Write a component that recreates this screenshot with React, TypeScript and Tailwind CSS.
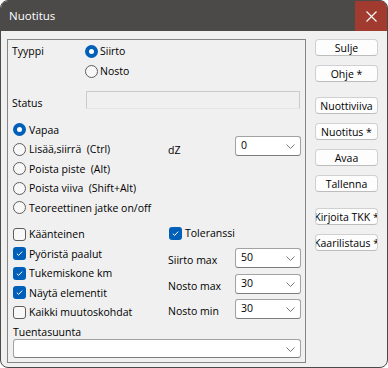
import React from "react";

function Radio({ checked }: { checked?: boolean }) {
  if (checked) {
    return (
      <span className="flex h-[13px] w-[13px] shrink-0 items-center justify-center rounded-full bg-[#005fb8]">
        <span className="h-[5px] w-[5px] rounded-full bg-white" />
      </span>
    );
  }
  return <span className="h-[13px] w-[13px] shrink-0 rounded-full border border-[#5d5d5d] bg-[#f8f8f8]" />;
}

function Check({ checked }: { checked?: boolean }) {
  if (checked) {
    return (
      <span className="flex h-[13px] w-[13px] shrink-0 items-center justify-center rounded-[3px] bg-[#005fb8]">
        <svg width="9" height="9" viewBox="0 0 9 9">
          <path d="M1.8 4.7 L3.6 6.4 L7.2 2.6" fill="none" stroke="white" strokeWidth="1" />
        </svg>
      </span>
    );
  }
  return <span className="h-[13px] w-[13px] shrink-0 rounded-[3px] border border-[#5d5d5d] bg-[#f8f8f8]" />;
}

function Combo({ value, className }: { value?: string; className: string }) {
  return (
    <div
      className={`flex items-center justify-between rounded-[3px] border border-[#a2a2a2] border-b-[#7d7d7d] bg-white pl-[5px] pr-[5px] ${className}`}
    >
      <span className="-mt-[2px] leading-[14px]">{value}</span>
      <svg width="9" height="5" viewBox="0 0 9 5" className="mt-[1px]">
        <path d="M0.5 0.5 L4.5 4.5 L8.5 0.5" fill="none" stroke="#6b6b6b" strokeWidth="0.9" />
      </svg>
    </div>
  );
}

function Btn({ label, className = "" }: { label: string; className?: string }) {
  return (
    <button
      type="button"
      className={`flex h-[17px] w-[63px] items-center justify-center overflow-hidden whitespace-nowrap rounded-[4px] border border-[#d0d0d0] border-b-[#bdbdbd] bg-[#fdfdfd] leading-[14px] ${className}`}
    >
      {label}
    </button>
  );
}

const modes = ["Vapaa", "Lisää,siirrä  (Ctrl)", "Poista piste  (Alt)", "Poista viiva  (Shift+Alt)", "Teoreettinen jatke on/off"];

const options = [
  { label: "Käänteinen", checked: false },
  { label: "Pyöristä paalut", checked: true },
  { label: "Tukemiskone km", checked: true },
  { label: "Näytä elementit", checked: true },
  { label: "Kaikki muutoskohdat", checked: false },
];

const limits = [
  { label: "Siirto max", value: "50" },
  { label: "Nosto max", value: "30" },
  { label: "Nosto min", value: "30" },
];

export default function App() {
  return (
    <div className="h-[368px] w-[388px] bg-white font-['Open_Sans','Noto_Sans',sans-serif] text-[10.5px] text-black">
      <div className="flex h-full w-full flex-col overflow-hidden rounded-[8px] border border-[#4b4a48] bg-[#f0f0f0]">
        {/* title bar */}
        <div className="flex h-[30px] shrink-0 items-center justify-between bg-[#4b4a48]">
          <span className="pl-[8px] text-[11.5px] text-white">Nuotitus</span>
          <div className="flex h-[30px] w-[32px] items-center justify-center bg-[#a13a2f]">
            <svg width="11" height="11" viewBox="0 0 11 11">
              <path d="M0.5 0.5 L10.5 10.5 M10.5 0.5 L0.5 10.5" stroke="white" strokeWidth="1.1" />
            </svg>
          </div>
        </div>

        <div className="flex">
          {/* group box */}
          <div className="ml-[6px] mt-[8px] flex h-[324px] w-[299px] flex-col border border-[#858585]">
            <div className="mt-[1px] flex">
              <span className="w-[77px] pl-[4px] pt-[3px] leading-[14px]">Tyyppi</span>
              <div className="flex flex-col">
                <div className="flex h-[20px] items-center gap-[2px]">
                  <Radio checked />
                  <span className="leading-[14px]">Siirto</span>
                </div>
                <div className="flex h-[20px] items-center gap-[2px]">
                  <Radio />
                  <span className="leading-[14px]">Nosto</span>
                </div>
              </div>
            </div>

            <div className="mt-[10px] flex items-start">
              <span className="w-[78px] pl-[4px] pt-[5px] leading-[14px]">Status</span>
              <div className="h-[18px] w-[214px] border border-[#cbcbcb] border-b-[#e6e6e6] bg-[#f0f0f0]" />
            </div>

            <div className="mt-[10px] flex">
              <div className="flex w-[160px] flex-col pl-[5px]">
                {modes.map((m, i) => (
                  <div key={m} className="flex h-[19.5px] items-center gap-[3px]">
                    <Radio checked={i === 0} />
                    <span className="whitespace-pre leading-[14px]">{m}</span>
                  </div>
                ))}
              </div>
              <span className="w-[67px] pt-[23px] leading-[14px]">dZ</span>
              <Combo value="0" className="mt-[16px] h-[20px] w-[66px]" />
            </div>

            <div className="mt-[7px] flex">
              <div className="flex w-[160px] flex-col pl-[5px]">
                {options.map((o) => (
                  <div key={o.label} className="flex h-[19.5px] items-center gap-[3px]">
                    <Check checked={o.checked} />
                    <span className="leading-[14px]">{o.label}</span>
                  </div>
                ))}
              </div>
              <div className="flex flex-col">
                <div className="-mt-[1px] flex h-[19.5px] items-center gap-[3px] pl-[1px]">
                  <Check checked />
                  <span className="leading-[14px]">Toleranssi</span>
                </div>
                <div className="mt-[5px] flex flex-col gap-[5.7px]">
                  {limits.map((l) => (
                    <div key={l.label} className="flex items-start">
                      <span className="w-[67px] pt-[5px] leading-[14px]">{l.label}</span>
                      <Combo value={l.value} className="h-[20px] w-[66px]" />
                    </div>
                  ))}
                </div>
              </div>
            </div>

            <span className="mt-[3px] h-[14px] pl-[5px] leading-[14px]">Tuentasuunta</span>
            <Combo className="ml-[5px] h-[19px] w-[288px]" />
          </div>

          {/* buttons */}
          <div className="ml-[9px] mt-[8px] flex flex-col">
            <Btn label="Sulje" />
            <Btn label="Ohje *" className="mt-[9px]" />
            <Btn label="Nuottiviiva" className="mt-[15px]" />
            <Btn label="Nuotitus *" className="mt-[9px]" />
            <Btn label="Avaa" className="mt-[9px]" />
            <Btn label="Tallenna" className="mt-[9px]" />
            <Btn label="Kirjoita TKK *" className="mt-[16px]" />
            <Btn label="Kaarilistaus *" className="mt-[9px]" />
          </div>
        </div>
      </div>
    </div>
  );
}
